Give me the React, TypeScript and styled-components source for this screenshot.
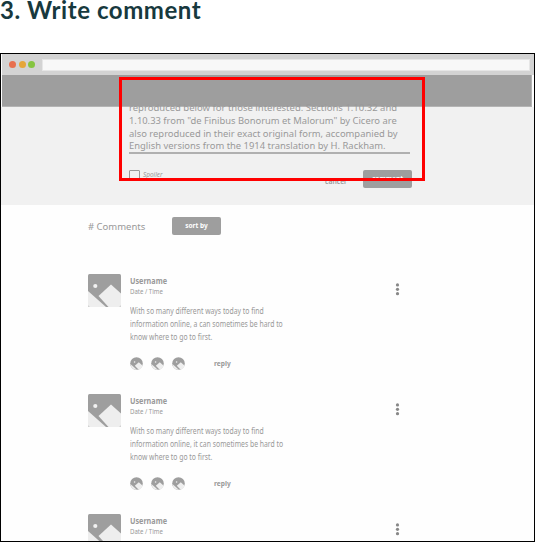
import React from 'react';
import styled, { createGlobalStyle } from 'styled-components';

const Global = createGlobalStyle`
  * { box-sizing: border-box; }
  body { margin: 0; background: #fff; overflow: hidden; font-family: 'Noto Sans', 'Open Sans', sans-serif; color: #999; }
`;
const Page = styled.main`width: 536px; height: 542px; overflow: hidden;`;
const Title = styled.h1`
  margin: 0; height: 53px; color: #17393e; white-space: nowrap;
  font: 700 24px/20px Lato, sans-serif; letter-spacing: 0.55px;
`;
const Frame = styled.section`
  position: relative; width: 535px; height: 489px; border: 1px solid #000; overflow: hidden; background: #fefefe;
`;
const BrowserBar = styled.header`
  height: 21px; margin-left: 1px; background: #d3d3d3; display: flex; align-items: center; padding: 0 4px 0 7px;
`;
const Light = styled.i<{ $color: string }>`
  width: 7px; height: 7px; border-radius: 50%; margin-right: 2.6px; background: ${p => p.$color};
`;
const Address = styled.div`flex: 1; height: 12px; margin-left: 4.5px; background: #f8f8f8; border: 1px solid #e6e6e6;`;
const Banner = styled.div`
  position: relative; height: 32px; margin: 0 2px 0 1px; background: #9e9e9e; border: solid #b4b4b4; border-width: 0 1px 1px 0;
`;
const Composer = styled.section`height: 98px; padding-left: 128px; background: #f1f1f1;`;
const Line = styled.div<{ $size: number; $height: number; $scale?: number; $weight?: number }>`
  width: max-content; white-space: nowrap; transform-origin: left center;
  font-size: ${p => p.$size}px; line-height: ${p => p.$height}px; font-weight: ${p => p.$weight ?? 400};
  transform: scaleX(${p => p.$scale ?? 1});
`;
const Draft = styled.div`display: flow-root; width: 281px; height: 47px; border-bottom: 2px solid #b0b0b0;`;
const DraftText = styled.div`margin-top: -5px;`;
const Actions = styled.div`display: flex; height: 18px; margin-top: 16px; align-items: flex-start;`;
const Checkbox = styled.i`width: 11px; height: 11px; border: 1px solid #999; border-radius: 1px;`;
const Spoiler = styled.span`width: 46px; margin-left: 3px; font-size: 6.4px; line-height: 10px; font-style: italic;`;
const Cancel = styled.span`width: 38px; margin: 5.5px 0 0 136px; font-size: 6.8px; line-height: 11px; font-weight: 600;`;
const Button = styled.button`
  width: 49px; height: 18px; border: 0; border-radius: 2px; padding: 0;
  background: #9e9e9e; color: #fff; font: 700 6.5px/18px 'Noto Sans', sans-serif; flex-shrink: 0;
`;
const Highlight = styled.div`position: absolute; left: 118px; top: 23px; width: 306px; height: 104px; border: 3px solid #f00;`;
const Discussion = styled.section`padding: 12px 0 0 87px;`;
const Toolbar = styled.div`height: 57px; display: flex; align-items: flex-start;`;
const Count = styled.div`width: 84px; padding-top: 1px;`;
const Comment = styled.article`height: 120px; display: flex; align-items: flex-start;`;
const Avatar = styled.svg`width: 33px; height: 33px; flex-shrink: 0;`;
const Body = styled.div`width: 264px; margin-left: 9px; padding-top: 1px;`;
const Copy = styled.div`margin-top: 9px;`;
const Reactions = styled.footer`height: 13px; margin-top: 14px; display: flex; align-items: center;`;
const Reaction = styled.svg`width: 13px; height: 13px; margin-right: 8px;`;
const Reply = styled.span`margin-left: 21px; font-size: 6.6px; line-height: 13px; font-weight: 700;`;
const Menu = styled.svg`width: 5px; height: 14px; margin-top: 8px; margin-left: 1px;`;

const Landscape = () => <><rect width="33" height="33" rx="1.5" fill="#9e9e9e" /><circle cx="7.3" cy="12" r="2.1" fill="#f1f1f1" /><path d="M0 17L18 33H2Q0 33 0 31Z" fill="#eee" /><path d="M10.5 22L23 10.5L33 19.5V31Q33 33 31 33H20.5Z" fill="#eee" /></>;
const MiniPicture = () => <Reaction viewBox="0 0 13 13"><circle cx="6.5" cy="6.5" r="6.3" fill="#9e9e9e" /><circle cx="4.6" cy="5" r=".8" fill="#eee" /><path d="M.4 7L6.9 12.8Q1.3 13 .4 7Z" fill="#eee" /><path d="M4.8 8.7L8.8 5.3L12.7 8.7Q11.7 12 8.5 12.5Z" fill="#eee" /></Reaction>;

const draft: [string, number][] = [
  ['reproduced below for those interested. Sections 1.10.32 and', 1],
  ['1.10.33 from "de Finibus Bonorum et Malorum" by Cicero are', 0.988],
  ['also reproduced in their exact original form, accompanied by', 0.99],
  ['English versions from the 1914 translation by H. Rackham.', 0.99],
];

function CommentCard({ message }: { message?: string[] }) {
  return <Comment>
    <Avatar viewBox="0 0 33 33"><Landscape /></Avatar>
    <Body>
      <Line $size={8.6} $height={12} $weight={700} $scale={0.84}>Username</Line>
      <Line $size={7.3} $height={9} $scale={0.83}>Date / Time</Line>
      {message && <>
        <Copy>{message.map(text => <Line key={text} $size={8.3} $height={12.8} $scale={0.825}>{text}</Line>)}</Copy>
        <Reactions><MiniPicture /><MiniPicture /><MiniPicture /><Reply>reply</Reply></Reactions>
      </>}
    </Body>
    <Menu viewBox="0 0 5 14">{[2.9, 7.3, 11.7].map(y => <circle key={y} cx="2.5" cy={y} r="1.6" fill="#888" />)}</Menu>
  </Comment>;
}

const firstMessage = ['With so many different ways today to find', 'information online, a can sometimes be hard to', 'know where to go to first.'];
const secondMessage = ['With so many different ways today to find', 'information online, it can sometimes be hard to', 'know where to go to first.'];

export default function App() {
  return <><Global /><Page>
    <Title>3. Write comment</Title>
    <Frame>
      <BrowserBar><Light $color="#e86f4e" /><Light $color="#e5a63a" /><Light $color="#85c440" /><Address /></BrowserBar>
      <Banner />
      <Composer>
        <Draft><DraftText>{draft.map(([text, scale]) => <Line key={text} $size={9.5} $height={12.75} $scale={scale}>{text}</Line>)}</DraftText></Draft>
        <Actions><Checkbox /><Spoiler>Spoiler</Spoiler><Cancel>cancel</Cancel><Button>comment</Button></Actions>
      </Composer>
      <Discussion>
        <Toolbar><Count><Line $size={9.5} $height={18}># Comments</Line></Count><Button>sort by</Button></Toolbar>
        <CommentCard message={firstMessage} /><CommentCard message={secondMessage} /><CommentCard />
      </Discussion>
      <Highlight />
    </Frame>
  </Page></>;
}
